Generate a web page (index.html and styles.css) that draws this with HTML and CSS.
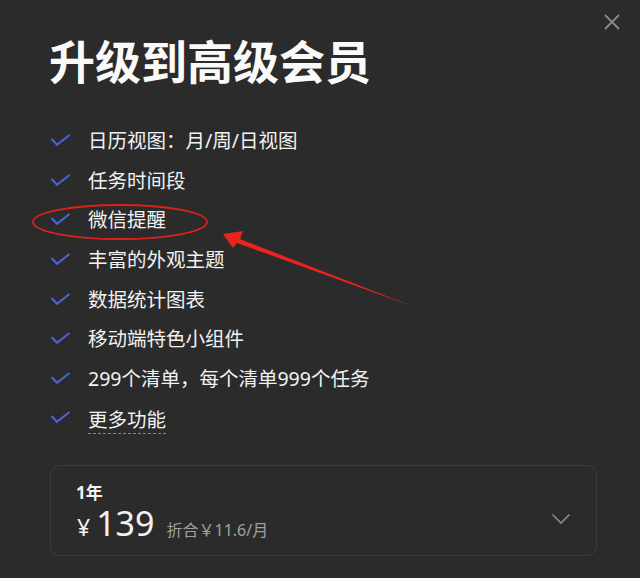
FILE: index.html
```html
<!DOCTYPE html>
<html>
<head>
    <title>升级到高级会员</title>
    <link rel="stylesheet" href="styles.css">
</head>
<body>
    <div class="dialog">
        <button class="close" aria-label="关闭">
            <svg width="18" height="18" viewBox="0 0 18 18"><path d="M2 2 L16 16 M16 2 L2 16" stroke="#8a8a8a" stroke-width="1.8" fill="none"/></svg>
        </button>
        <h1 class="title">升级到高级会员</h1>
        <ul class="features">
            <li><span class="check"></span>日历视图：月/周/日视图</li>
            <li><span class="check"></span>任务时间段</li>
            <li><span class="check"></span>微信提醒</li>
            <li><span class="check"></span>丰富的外观主题</li>
            <li><span class="check"></span>数据统计图表</li>
            <li><span class="check"></span>移动端特色小组件</li>
            <li><span class="check"></span>299个清单，每个清单999个任务</li>
            <li><span class="check"></span><span class="more">更多功能</span></li>
        </ul>
        <div class="plan">
            <div class="plan-info">
                <div class="plan-name">1年</div>
                <div class="plan-price">
                    <span class="yen">¥</span><span class="amount">139</span>
                    <span class="monthly">折合￥11.6/月</span>
                </div>
            </div>
            <svg class="chevron" width="20" height="12" viewBox="0 0 20 12"><path d="M1.5 1.5 L10 10 L18.5 1.5" stroke="#8a8a8a" stroke-width="1.6" fill="none"/></svg>
        </div>
    </div>

    <!-- annotation drawn over the screenshot -->
    <svg class="markup" width="640" height="578" viewBox="0 0 640 578">
        <ellipse cx="120" cy="222" rx="87" ry="17" fill="none" stroke="#d9221c" stroke-width="1.8"/>
        <polygon points="223,234 243,231 240,239 417,308 237,243 233,248" fill="#e8241c"/>
    </svg>
</body>
</html>
```

FILE: styles.css
```css
body {
    margin: 0;
    background-color: #2b2b2b;
    font-family: "Noto Sans", "Noto Sans CJK SC", sans-serif;
    color: #f2f2f2;
}
.dialog {
    position: relative;
    width: 640px;
    height: 578px;
    padding: 30px 43px 0 50px;
    box-sizing: border-box;
}
.close {
    position: absolute;
    top: 13px;
    right: 19px;
    padding: 0;
    border: none;
    background: none;
}
.title {
    margin: 0 0 0 -1px;
    font-size: 46px;
    font-weight: bold;
    line-height: 62px;
    color: #fafafa;
}
.features {
    list-style: none;
    margin: 28px 0 0 0;
    padding: 0;
}
.features li {
    display: flex;
    align-items: center;
    height: 39.6px;
    font-size: 19.5px;
}
.check {
    width: 21px;
    height: 12px;
    margin-right: 17px;
    margin-top: 1px;
    background: no-repeat center / 21px 12px url("data:image/svg+xml,%3Csvg xmlns='http://www.w3.org/2000/svg' width='21' height='12' viewBox='0 0 21 12'%3E%3Cpath d='M1.5 5 L7 10.8 L19.5 1' stroke='%234a66dd' stroke-width='2' fill='none'/%3E%3C/svg%3E");
}
.more {
    border-bottom: 1px dashed #8a8a8a;
    line-height: 26px;
    margin-top: 8px;
}
.plan {
    display: flex;
    justify-content: space-between;
    margin-top: 28px;
    height: 91px;
    padding: 16px 25px 0 25px;
    box-sizing: border-box;
    border: 1.5px solid #3c3c3c;
    border-radius: 10px;
}
.plan-name {
    font-size: 17px;
    font-weight: bold;
    line-height: 22px;
}
.plan-price {
    display: flex;
    align-items: baseline;
    line-height: 38px;
}
.yen {
    font-size: 23px;
    margin-right: 6px;
    margin-left: 1px;
}
.amount {
    font-size: 34px;
}
.monthly {
    font-size: 16px;
    color: #a0a0a0;
    margin-left: 12px;
}
.chevron {
    margin-top: 31px;
}
.markup {
    position: absolute;
    left: 0;
    top: 0;
    pointer-events: none;
}
```
